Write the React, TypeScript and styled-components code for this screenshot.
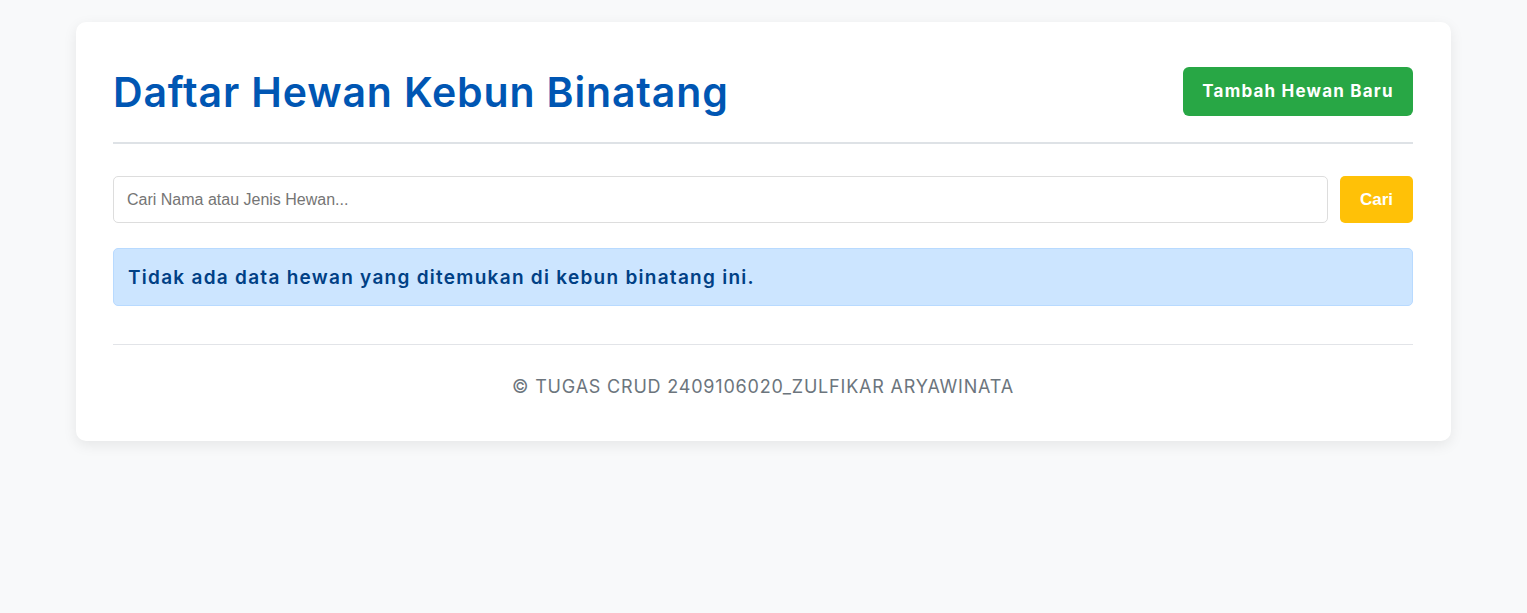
import React from "react";
import styled, { createGlobalStyle } from "styled-components";

const Global = createGlobalStyle`
  html, body { margin: 0; padding: 0; background: #f8f9fa; }
  body { font-family: "Inter", "Noto Sans", sans-serif; }
  * { box-sizing: border-box; }
`;

const Page = styled.div`
  padding: 22px 76px 40px;
`;

const Card = styled.main`
  background: #ffffff;
  border-radius: 10px;
  box-shadow: 0 4px 14px rgba(0, 0, 0, 0.08);
  padding: 45px 38px 42px 37px;
`;

const Header = styled.header`
  display: flex;
  align-items: center;
  justify-content: space-between;
  padding-bottom: 25px;
  border-bottom: 2px solid #dee2e6;
`;

const Title = styled.h1`
  margin: 0;
  font-family: "Inter", sans-serif;
  font-weight: 600;
  font-size: 41px;
  line-height: 50px;
  color: #0056b3;
  letter-spacing: 0.85px;
`;

const AddButton = styled.button`
  border: none;
  border-radius: 6px;
  background: #28a745;
  color: #ffffff;
  font-family: "Inter", sans-serif;
  font-weight: 700;
  font-size: 17px;
  letter-spacing: 1.2px;
  height: 49px;
  width: 230px;
  cursor: pointer;
  margin-top: -2px;
`;

const SearchForm = styled.form`
  display: flex;
  gap: 12px;
  margin-top: 32px;
`;

const SearchInput = styled.input`
  flex: 1;
  height: 47px;
  border: 1px solid #dddddd;
  border-radius: 5px;
  padding: 0 13px;
  font-family: "Liberation Sans", Arial, sans-serif;
  font-size: 16px;
  color: #333;
  &::placeholder { color: #757575; }
`;

const SearchButton = styled.button`
  border: none;
  border-radius: 5px;
  background: #ffc107;
  color: #ffffff;
  font-family: "Liberation Sans", Arial, sans-serif;
  font-weight: 700;
  font-size: 17px;
  width: 73px;
  height: 47px;
  cursor: pointer;
`;

const Alert = styled.div`
  margin-top: 25px;
  background: #cce5ff;
  border: 1px solid #b8daff;
  border-radius: 5px;
  color: #004085;
  font-family: "Inter", sans-serif;
  font-weight: 600;
  font-size: 19px;
  letter-spacing: 1.27px;
  height: 58px;
  display: flex;
  align-items: center;
  padding: 0 14px;
`;

const Footer = styled.footer`
  margin-top: 38px;
  border-top: 1px solid #e2e4e8;
  padding-top: 30px;
  text-align: center;
  font-family: "Inter", sans-serif;
  font-size: 18px;
  line-height: 24px;
  letter-spacing: 0.8px;
  color: #6c757d;
`;

export default function App() {
  return (
    <>
      <Global />
      <Page>
        <Card>
          <Header>
            <Title>Daftar Hewan Kebun Binatang</Title>
            <AddButton type="button">Tambah Hewan Baru</AddButton>
          </Header>
          <SearchForm onSubmit={(e) => e.preventDefault()}>
            <SearchInput type="text" placeholder="Cari Nama atau Jenis Hewan..." />
            <SearchButton type="submit">Cari</SearchButton>
          </SearchForm>
          <Alert>Tidak ada data hewan yang ditemukan di kebun binatang ini.</Alert>
          <Footer>© TUGAS CRUD 2409106020_ZULFIKAR ARYAWINATA</Footer>
        </Card>
      </Page>
    </>
  );
}
